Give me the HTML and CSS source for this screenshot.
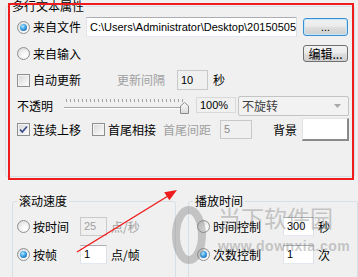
FILE: index.html
```html
<!DOCTYPE html>
<html lang="zh-CN">
<head>
    <meta charset="UTF-8">
    <title>多行文本属性</title>
    <link rel="stylesheet" href="styles.css">
</head>
<body>
    <div class="window">
        <fieldset class="group group-text">
            <legend>多行文本属性</legend>
            <div class="group-body text-body">
                <div class="row row-file">
                    <label class="choice w-69"><span class="radio on"></span>来自文件</label>
                    <div class="field path-field">C:\Users\Administrator\Desktop\20150505-1.txt</div>
                    <button class="btn btn-default">...</button>
                </div>
                <div class="row row-input">
                    <label class="choice w-69"><span class="radio"></span>来自输入</label>
                    <button class="btn btn-edit">编辑...</button>
                </div>
                <div class="row row-update">
                    <label class="choice w-100"><span class="check"></span>自动更新</label>
                    <span class="label off w-54">更新间隔</span>
                    <div class="field field-off num-field">10</div>
                    <span class="label unit">秒</span>
                </div>
                <div class="row row-opacity">
                    <span class="label w-45">不透明</span>
                    <svg class="slider" width="128" height="20" viewBox="0 0 128 20">
                        <defs>
                            <pattern id="tick" width="4" height="20" patternUnits="userSpaceOnUse">
                                <rect x="0" y="0" width="1" height="20" fill="#a3a3a3"/>
                            </pattern>
                            <linearGradient id="thumbFill" x1="0" y1="0" x2="0" y2="1">
                                <stop offset="0" stop-color="#fbfbfb"/>
                                <stop offset="1" stop-color="#d9d9d9"/>
                            </linearGradient>
                        </defs>
                        <rect x="4" y="3" width="117" height="3" fill="url(#tick)"/>
                        <rect x="2" y="11" width="124" height="1" fill="#a6a6a6"/>
                        <rect x="2" y="12" width="124" height="1" fill="#ffffff"/>
                        <path d="M118.5 10 L122.5 6.5 L126.5 10 V17.5 H118.5 Z" fill="url(#thumbFill)" stroke="#8c8c8c"/>
                    </svg>
                    <div class="field field-plain pct-field">100%</div>
                    <div class="combo">
                        <span class="combo-text">不旋转</span>
                        <svg class="combo-arrow" width="7" height="4" viewBox="0 0 7 4"><path d="M0 0 H7 L3.5 4 Z" fill="#a8a8a8"/></svg>
                    </div>
                </div>
                <div class="row row-scroll">
                    <label class="choice w-75"><span class="check on"><svg width="11" height="11" viewBox="0 0 11 11"><path d="M2 5.5 L4.3 8 L9 2.5" fill="none" stroke="#3d4f8c" stroke-width="1.8"/></svg></span>连续上移</label>
                    <label class="choice w-71"><span class="check"></span>首尾相接</label>
                    <span class="label off w-57">首尾间距</span>
                    <div class="field field-off gap-field">5</div>
                    <span class="label bg-label">背景</span>
                    <button class="color-btn"></button>
                </div>
            </div>
        </fieldset>

        <div class="bottom">
            <fieldset class="group group-speed">
                <legend>滚动速度</legend>
                <div class="group-body speed-body">
                    <div class="row row-small">
                        <label class="choice w-63"><span class="radio"></span>按时间</label>
                        <div class="field field-off small-field">25</div>
                        <span class="label off unit">点/秒</span>
                    </div>
                    <div class="row row-small row-gap">
                        <label class="choice w-63"><span class="radio on"></span>按帧</label>
                        <div class="field small-field">1</div>
                        <span class="label unit">点/帧</span>
                    </div>
                </div>
            </fieldset>
            <fieldset class="group group-play">
                <legend>播放时间</legend>
                <div class="group-body play-body">
                    <div class="row row-small">
                        <label class="choice w-86"><span class="radio"></span>时间控制</label>
                        <div class="field play-field">300</div>
                        <span class="label unit">秒</span>
                    </div>
                    <div class="row row-small row-gap">
                        <label class="choice w-86"><span class="radio on"></span>次数控制</label>
                        <div class="field play-field">1</div>
                        <span class="label unit">次</span>
                    </div>
                </div>
            </fieldset>
        </div>

        <div class="mark-box"></div>

        <div class="watermark">
            <svg class="wm-logo" width="40" height="66" viewBox="0 0 40 66">
                <ellipse cx="19" cy="32" rx="13" ry="25" fill="none" stroke="#7d7d7d" stroke-width="8"/>
            </svg>
            <div class="wm-text">
                <div class="wm-name">当下软件园</div>
                <div class="wm-url">www.downxia.com</div>
            </div>
        </div>

        <svg class="arrow" width="358" height="277" viewBox="0 0 358 277">
            <line x1="77" y1="252" x2="168" y2="196" stroke="#ee1c1c" stroke-width="1.4"/>
            <path d="M177 190 L169.4 200.3 L164.2 192.2 Z" fill="#ee1c1c"/>
        </svg>
    </div>
</body>
</html>
```

FILE: styles.css
```css
/* Base */
* {
    box-sizing: border-box;
}

body {
    margin: 0;
    background: #f0f0f0;
    font-family: "Noto Sans CJK SC", "Liberation Sans", sans-serif;
    font-size: 12px;
    color: #000;
}

.window {
    position: relative;
    width: 358px;
    height: 277px;
    overflow: hidden;
}

/* Group boxes */
.group {
    margin: 0;
    padding: 0;
    min-width: 0;
    border: 1px solid #d5dfe5;
    border-radius: 3px;
}

.group legend {
    margin-left: 4px;
    padding: 0 2px;
    height: 14px;
    line-height: 14px;
}

.group-text {
    margin: -1px 3px 0 5px;
}

.text-body {
    padding: 4px 6px 35px 11px;
}

.bottom {
    display: flex;
    margin-top: 17px;
}

.group-speed {
    margin-left: 12px;
    width: 171px;
    height: 120px;
}

.group-play {
    margin-left: 12px;
    width: 170px;
    height: 120px;
    flex-shrink: 0;
}

.speed-body {
    padding: 9px 0 0 4px;
}

.play-body {
    padding: 9px 0 0 8px;
}

/* Rows */
.row {
    display: flex;
    align-items: center;
}

.row > * {
    flex-shrink: 0;
}

.row-file {
    height: 20px;
}

.row-input {
    height: 19px;
    margin-top: 7px;
    justify-content: space-between;
}

.row-update {
    height: 20px;
    margin-top: 7px;
}

.row-opacity {
    height: 20px;
    margin-top: 6px;
}

.row-scroll {
    height: 23px;
    margin-top: 2px;
}

.row-small {
    height: 19px;
}

.row-gap {
    margin-top: 9px;
}

/* Labels */
.label,
.choice {
    line-height: 14px;
    white-space: nowrap;
}

.choice {
    display: flex;
    align-items: center;
}

.off {
    color: #a0a0a0;
}

.unit {
    margin-left: 4px;
}

.w-45 { width: 45px; }
.w-54 { width: 54px; }
.w-57 { width: 57px; }
.w-63 { width: 63px; }
.w-69 { width: 69px; }
.w-71 { width: 71px; }
.w-75 { width: 75px; }
.w-86 { width: 86px; }
.w-100 { width: 100px; }

/* Radio + checkbox */
.radio,
.check {
    position: relative;
    width: 13px;
    height: 13px;
    margin-right: 3px;
    flex-shrink: 0;
}

.radio {
    border-radius: 50%;
    border: 1px solid #8f9091;
    background: radial-gradient(circle at 65% 70%, #ffffff 0, #f1f1f1 45%, #cfcfcf 100%);
}

.radio.on::after {
    content: "";
    position: absolute;
    left: 2px;
    top: 2px;
    width: 7px;
    height: 7px;
    border-radius: 50%;
    background: radial-gradient(circle at 40% 35%, #b8ecff 0, #3aa0e6 45%, #10508f 100%);
}

.check {
    border: 1px solid #8e8f8f;
    background: linear-gradient(135deg, #d6d6d6, #ffffff);
    box-shadow: inset 0 0 0 1px #f3f3f3;
}

.check svg {
    position: absolute;
    left: 0;
    top: 0;
}

/* Text fields */
.field {
    height: 20px;
    padding-left: 3px;
    border: 1px solid;
    border-color: #abadb3 #dbdfe6 #e3e9ef #e2e3ea;
    background: #fff;
    font-family: "Liberation Sans", sans-serif;
    font-size: 11px;
    line-height: 18px;
    white-space: nowrap;
    overflow: hidden;
}

.field-off {
    background: #f0f0f0;
    border-color: #c9c9c9;
}

.field-plain {
    background: #f0f0f0;
    border-color: #d9d9d9;
}

.path-field {
    width: 211px;
    margin-left: 0;
}

.num-field {
    width: 31px;
    margin-left: 6px;
}

.num-field + .unit {
    margin-left: 5px;
}

.pct-field {
    width: 40px;
    height: 16px;
    line-height: 14px;
    margin-left: 6px;
    margin-top: -3px;
}

.gap-field {
    width: 32px;
    height: 19px;
    line-height: 17px;
    color: #8c8c8c;
}

.small-field {
    width: 27px;
    height: 19px;
    line-height: 17px;
}

.field-off.small-field {
    color: #a0a0a0;
}

.play-field {
    width: 31px;
    height: 19px;
    line-height: 17px;
}

/* Slider */
.slider {
    display: block;
}

/* Combo */
.combo {
    display: flex;
    align-items: center;
    justify-content: space-between;
    width: 111px;
    height: 20px;
    margin-left: 2px;
    padding: 0 7px 0 3px;
    border: 1px solid #c3c3c3;
    border-radius: 2px;
    background: #f2f2f2;
    color: #404040;
    line-height: 14px;
}

/* Buttons */
.btn {
    height: 18px;
    width: 45px;
    padding: 0;
    border: 1px solid #707070;
    border-radius: 3px;
    background: linear-gradient(#f2f2f2, #ebebeb 45%, #dddddd 55%, #cfcfcf);
    font-family: "Noto Sans CJK SC", sans-serif;
    font-size: 12px;
    line-height: 14px;
    color: #000;
}

.btn-default {
    margin-left: 6px;
    border-color: #3c8fd0;
    box-shadow: inset 0 0 0 1px #bfe6fb;
    font-family: "Liberation Sans", sans-serif;
    font-size: 11px;
}

.btn-edit {
    height: 17px;
}

.bg-label {
    width: 29px;
    margin-left: 21px;
}

.color-btn {
    width: 47px;
    height: 23px;
    padding: 0;
    background: #fff;
    border-style: solid;
    border-width: 1px 2px 2px 1px;
    border-color: #e3e3e3 #8a8a8a #8a8a8a #e3e3e3;
}

/* Overlays */
.mark-box {
    position: absolute;
    left: 8px;
    top: 3px;
    width: 346px;
    height: 177px;
    border: 2px solid #ee1c1c;
}

.arrow {
    position: absolute;
    left: 0;
    top: 0;
    pointer-events: none;
}

.watermark {
    position: absolute;
    left: 170px;
    top: 203px;
    display: flex;
    opacity: 0.38;
    pointer-events: none;
    color: #7d7d7d;
}

.wm-logo {
    display: block;
}

.wm-text {
    margin-left: 8px;
}

.wm-name {
    font-size: 23px;
    line-height: 28px;
    letter-spacing: 0;
}

.wm-url {
    margin-top: 8px;
    font-family: "Liberation Sans", sans-serif;
    font-size: 14px;
    font-weight: bold;
    line-height: 14px;
    letter-spacing: 0.5px;
}
```
